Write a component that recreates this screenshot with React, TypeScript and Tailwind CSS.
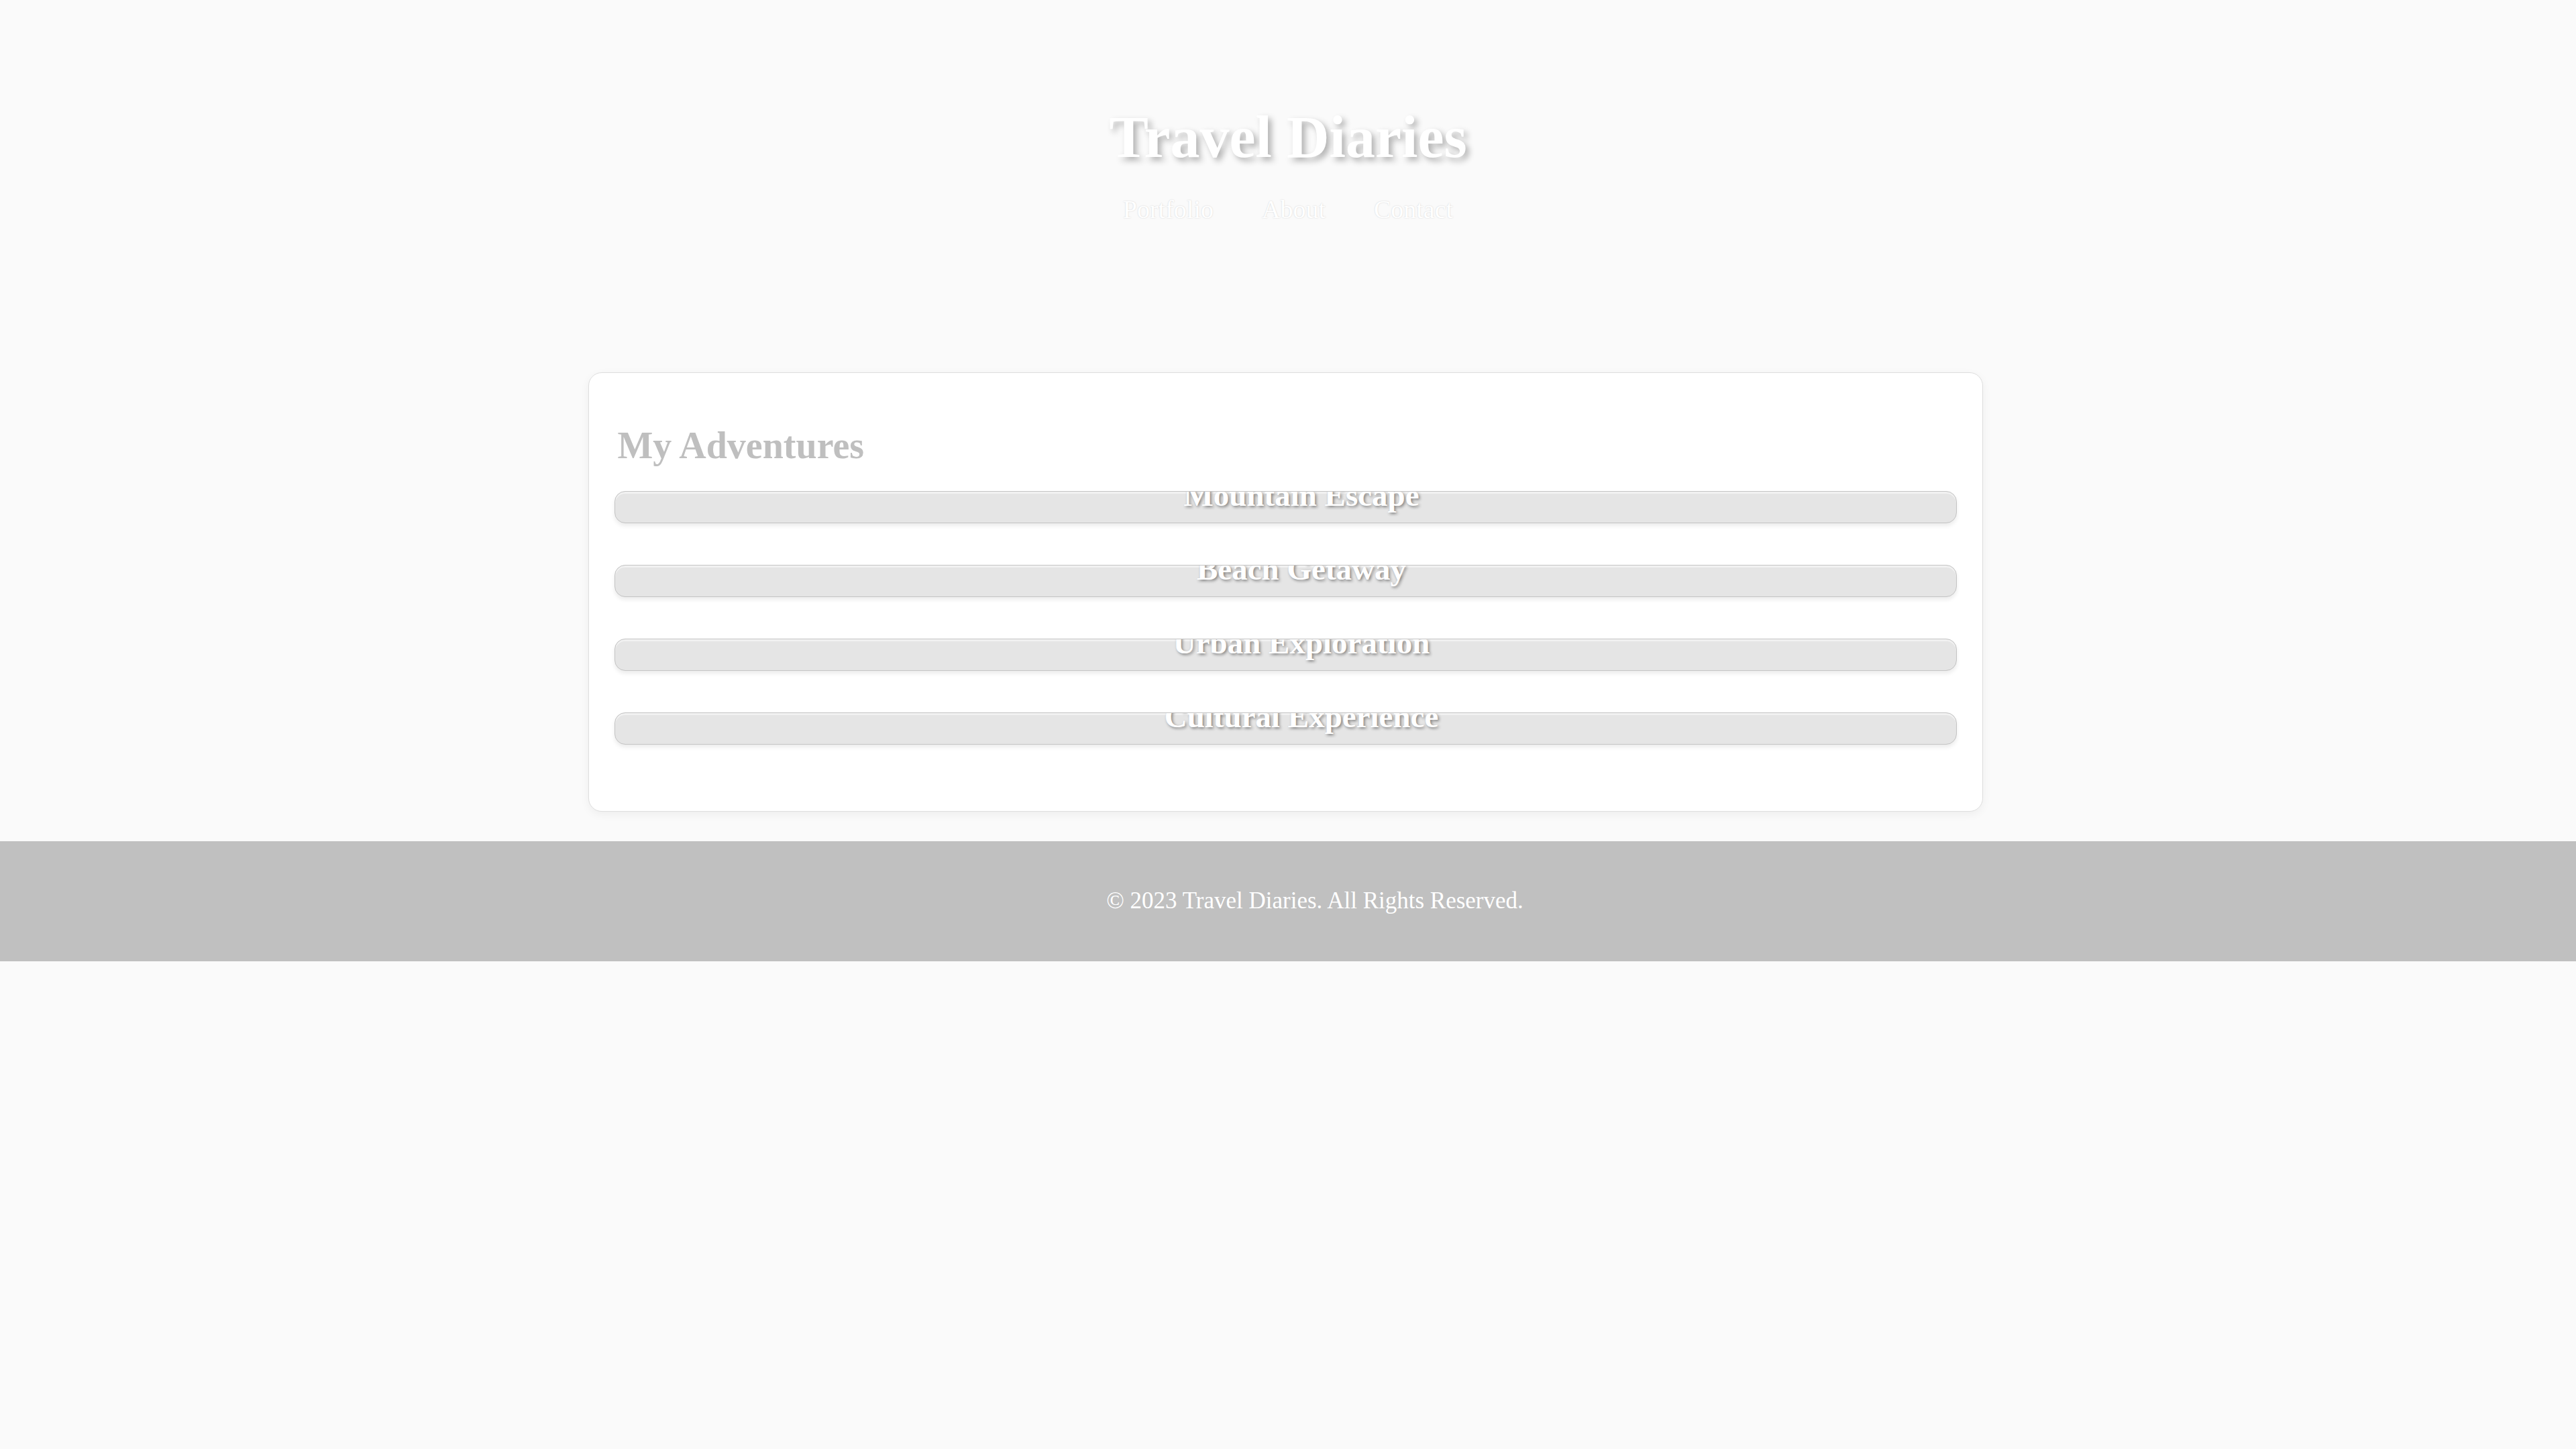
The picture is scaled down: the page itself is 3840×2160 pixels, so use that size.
const adventures = [
  "Mountain Escape",
  "Beach Getaway",
  "Urban Exploration",
  "Cultural Experience",
];

const navLinks = ["Portfolio", "About", "Contact"];

function AdventureBar({ title }: { title: string }) {
  return (
    <div className="h-[48px] overflow-hidden rounded-[16px] border border-[#c4c4c4] bg-[#e5e5e5] shadow-[0_4px_6px_rgba(0,0,0,0.08),inset_0_3px_0_rgba(255,255,255,0.45)]">
      <h3 className="-mt-[18px] pl-[48px] text-center text-[47px] font-bold leading-none text-white [text-shadow:2px_2px_4px_rgba(0,0,0,0.45)]">
        {title}
      </h3>
    </div>
  );
}

export default function App() {
  return (
    <div className="min-h-screen bg-[#fafafa] font-['Liberation_Serif',Georgia,serif]">
      {/* Header */}
      <header className="pt-[161px] text-center">
        <h1 className="text-[88px] font-bold leading-none text-white [text-shadow:5px_5px_10px_rgba(0,0,0,0.3)]">
          Travel Diaries
        </h1>
        <nav className="mt-[44px] flex justify-center gap-[72px]">
          {navLinks.map((link) => (
            <a
              key={link}
              href="#"
              className="text-[38px] leading-none text-white [text-shadow:0_0_2px_rgba(0,0,0,0.18)]"
            >
              {link}
            </a>
          ))}
        </nav>
      </header>

      {/* Adventures card */}
      <div className="mt-[224px] pr-[8px]">
        <main className="mx-auto w-[2079px]">
          <section className="rounded-[20px] border border-[#dedede] bg-white px-[38px] pt-[80px] pb-[99px] shadow-[0_4px_14px_rgba(0,0,0,0.05)]">
            <h2 className="pl-[5px] text-[56px] font-bold leading-none text-[#bfbfbf]">
              My Adventures
            </h2>
            <div className="mt-[40px] flex flex-col gap-[62px]">
              {adventures.map((a) => (
                <AdventureBar key={a} title={a} />
              ))}
            </div>
          </section>
        </main>
      </div>

      {/* Footer */}
      <footer className="mt-[44px] flex h-[179px] items-center justify-center bg-[#c0c0c0] pl-[80px]">
        <p className="text-[35px] text-white">
          © 2023 Travel Diaries. All Rights Reserved.
        </p>
      </footer>
    </div>
  );
}
